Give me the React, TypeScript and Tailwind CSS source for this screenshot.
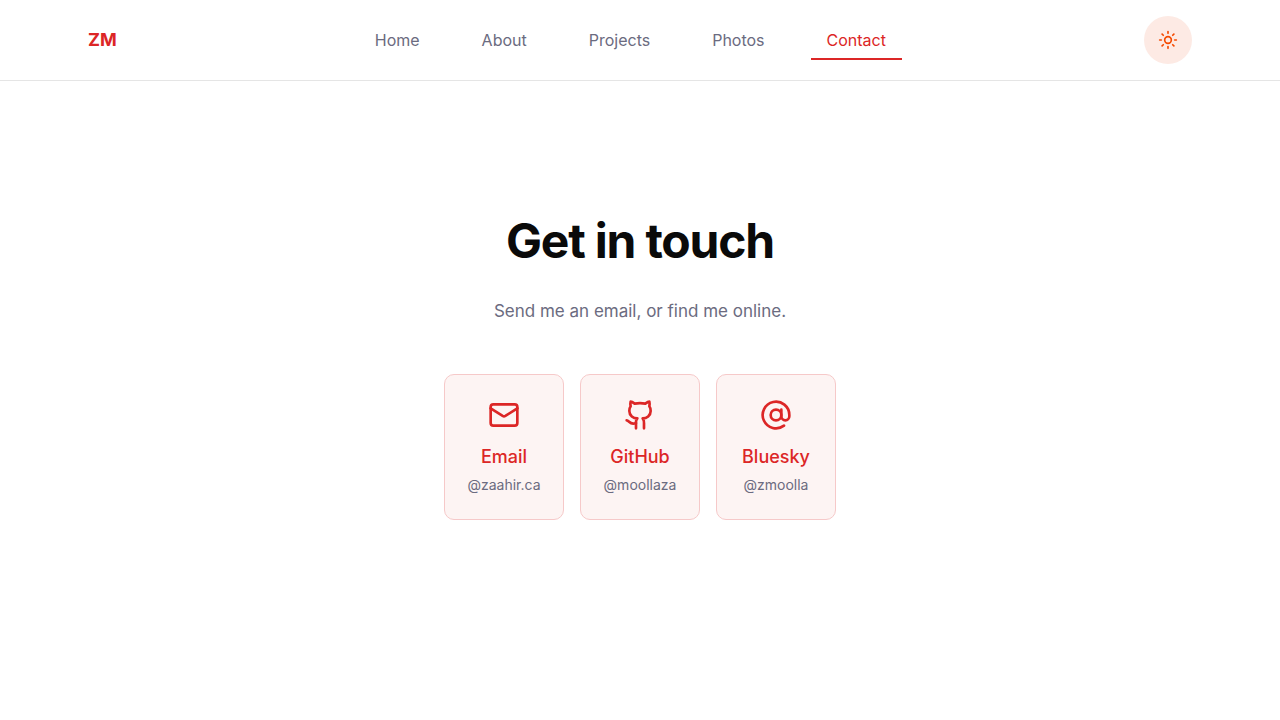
import { useState } from "react";
import { AtSign, Github, Mail, Sun } from "lucide-react";

const links = ["Home", "About", "Projects", "Photos", "Contact"];

const contacts = [
  { label: "Email", handle: "@zaahir.ca", href: "#email", Icon: Mail },
  { label: "GitHub", handle: "@moollaza", href: "#github", Icon: Github },
  { label: "Bluesky", handle: "@zmoolla", href: "#bluesky", Icon: AtSign },
];

export default function App() {
  const [current, setCurrent] = useState("Contact");
  return (
    <div className="min-h-screen bg-white font-['Inter',sans-serif] text-[#0a0a0a] antialiased">
      <header className="border-b border-[#e5e5e5]">
        <div className="mx-auto flex h-20 max-w-[1152px] items-center justify-between px-6">
          <a href="#home" className="text-lg font-bold text-[#dc2626]">
            ZM
          </a>
          <nav className="flex items-center gap-[30px]">
            {links.map((link) => (
              <a
                key={link}
                href={`#${link.toLowerCase()}`}
                onClick={() => setCurrent(link)}
                aria-current={current === link ? "page" : undefined}
                className={
                  current === link
                    ? "px-4 py-2 text-base leading-6 text-[#dc2626] shadow-[inset_0_-2px_0_#dc2626]"
                    : "px-4 py-2 text-base leading-6 text-[#6b6b80]"
                }
              >
                {link}
              </a>
            ))}
          </nav>
          <button
            type="button"
            aria-label="Toggle theme"
            className="flex size-12 items-center justify-center rounded-full bg-[#fdeae4] text-[#f54a00]"
          >
            <Sun className="size-5" />
          </button>
        </div>
      </header>
      <main className="flex flex-col items-center px-6 pt-32 text-center">
        <h1 className="text-5xl leading-[64px] font-bold tracking-tight">Get in touch</h1>
        <p className="mt-6 text-[17px] leading-[29px] text-[#6b6b80]">Send me an email, or find me online.</p>
        <ul className="mt-12 grid w-full max-w-[392px] grid-cols-3 gap-4">
          {contacts.map(({ label, handle, href, Icon }) => (
            <li key={label}>
              <a
                href={href}
                className="flex flex-col items-center rounded-[10px] border border-[#f6c9c9] bg-[#fdf4f3] px-4 py-6"
              >
                <Icon className="size-8 text-[#dc2626]" />
                <span className="mt-3 text-lg leading-7 font-medium text-[#dc2626]">{label}</span>
                <span className="mt-1 text-sm leading-5 text-[#6b6b80]">{handle}</span>
              </a>
            </li>
          ))}
        </ul>
      </main>
    </div>
  );
}
